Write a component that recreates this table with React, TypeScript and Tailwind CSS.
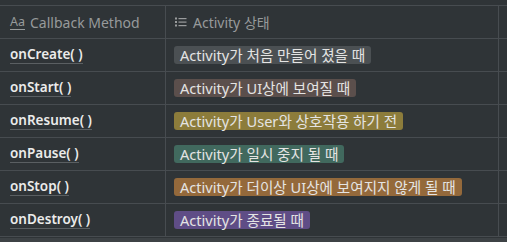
import React from "react";

const rows: { name: string; text: string; bg: string }[] = [
  { name: "onCreate( )", text: "Activity가 처음 만들어 졌을 때", bg: "bg-[#4b5053]" },
  { name: "onStart( )", text: "Activity가 UI상에 보여질 때", bg: "bg-[#5b4f4c]" },
  { name: "onResume( )", text: "Activity가 User와 상호작용 하기 전", bg: "bg-[#8c7c3b]" },
  { name: "onPause( )", text: "Activity가 일시 중지 될 때", bg: "bg-[#41695e]" },
  { name: "onStop( )", text: "Activity가 더이상 UI상에 보여지지 않게 될 때", bg: "bg-[#94693b]" },
  { name: "onDestroy( )", text: "Activity가 종료될 때", bg: "bg-[#5f4d86]" },
];

function ListIcon() {
  return (
    <svg width="14" height="14" viewBox="0 0 14 14" fill="#9a9c9d">
      <rect x="1" y="2.5" width="2" height="2" />
      <rect x="1" y="6" width="2" height="2" />
      <rect x="1" y="9.5" width="2" height="2" />
      <rect x="4.5" y="3" width="8" height="1.2" />
      <rect x="4.5" y="6.5" width="8" height="1.2" />
      <rect x="4.5" y="10" width="8" height="1.2" />
    </svg>
  );
}

export default function App() {
  const font = { fontFamily: '"Noto Sans", "Noto Sans CJK KR", sans-serif' };
  return (
    <div className="w-[507px] h-[242px] bg-[#2f3437] overflow-hidden flex flex-col" style={font}>
      <div className="h-[5px]" />
      <div className="border-t border-[#474c50]">
        <div className="grid grid-cols-[166px_333px_8px] h-[33px] border-b border-[#474c50]">
          <div className="border-r border-[#474c50] flex items-center pl-[10px] gap-[5px] text-[#979a9b] text-[14px]">
            <span className="text-[12.5px] underline underline-offset-[3px] leading-none">Aa</span>
            <span>Callback Method</span>
          </div>
          <div className="border-r border-[#474c50] flex items-center pl-[8px] gap-[5px] text-[#979a9b] text-[14px]">
            <ListIcon />
            <span>Activity 상태</span>
          </div>
          <div />
        </div>
        {rows.map((r) => (
          <div key={r.name} className="grid grid-cols-[166px_333px_8px] h-[33px] border-b border-[#474c50]">
            <div className="border-r border-[#474c50] flex items-center pl-[10px]">
              <span className="text-[13.5px] font-semibold text-[#ebebea] leading-[17px] border-b border-[#5a5f62]">
                {r.name}
              </span>
            </div>
            <div className="border-r border-[#474c50] flex items-center pl-[8px]">
              <span className={`${r.bg} rounded-[3px] px-[6px] h-[18px] flex items-center text-[14.6px] text-[#e4e4e3] leading-none`}>
                {r.text}
              </span>
            </div>
            <div />
          </div>
        ))}
      </div>
      <div className="flex-1 bg-[#3d4245] mt-[1px]" />
    </div>
  );
}
